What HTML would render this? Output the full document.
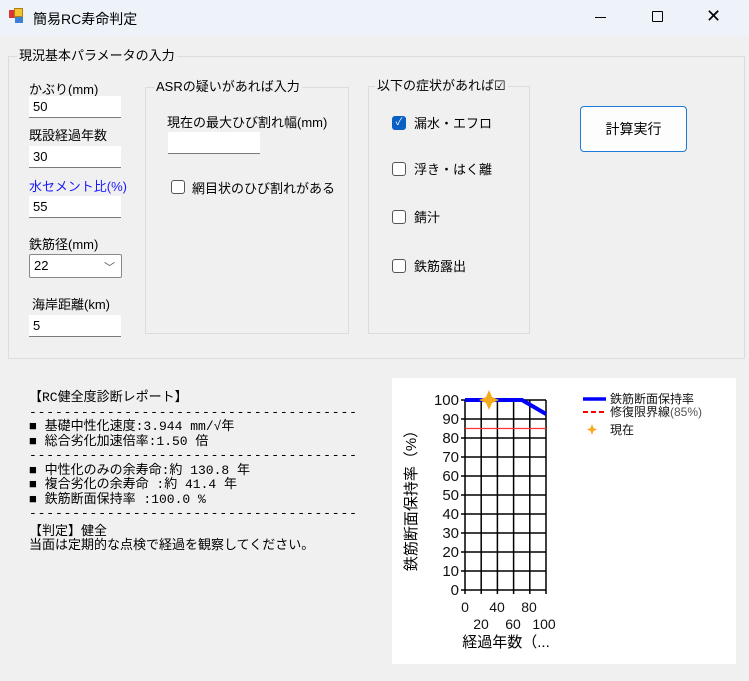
<!DOCTYPE html>
<html><head><meta charset="utf-8"><style>
*{margin:0;padding:0;box-sizing:border-box}
body{width:749px;height:681px;background:#f0f0f0;position:relative;overflow:hidden;font-family:"Liberation Sans","Noto Sans CJK JP",sans-serif;font-size:13px;color:#000}
.a{position:absolute;white-space:nowrap}
.tb{background:#fff;border-bottom:1px solid #7a7a7a;height:22px;width:92px;padding:3px 4px;font-size:13px;font-family:"Liberation Sans","Noto Sans CJK JP",sans-serif}
.gb{position:absolute;border:1px solid #dcdcdc}
.lg{position:absolute;background:#f0f0f0;padding:0 2px;font-size:13px;top:-10px;line-height:18px}
.cb{position:absolute;width:14px;height:14px;border:1px solid #555;border-radius:3px;background:#fff}
.rep{font-family:"Liberation Mono","Noto Sans CJK JP",monospace;font-size:13px;line-height:14.5px}
.d{letter-spacing:0.85px}
</style></head><body>
<div class="a" style="left:0;top:0;width:749px;height:36px;background:#eef3fa"></div>
<div class="a" style="left:9px;top:10px;width:8px;height:8px;background:#d33"></div>
<div class="a" style="left:14px;top:8px;width:9px;height:9px;background:#f4c430;border:1px solid #b08010"></div>
<div class="a" style="left:15px;top:17px;width:8px;height:6px;background:#3d7fd6"></div>
<div class="a" style="left:33px;top:9px;font-size:14px">簡易RC寿命判定</div>
<div class="a" style="left:595px;top:17px;width:11px;height:1px;background:#000"></div>
<div class="a" style="left:652px;top:11px;width:11px;height:11px;border:1px solid #000;border-radius:1px"></div>
<div class="a" style="left:706px;top:6px;font-size:18px;line-height:20px">✕</div>

<div class="gb" style="left:8px;top:56px;width:737px;height:303px"><div class="lg" style="left:8px">現況基本パラメータの入力</div></div>

<div class="a" style="left:29px;top:79px">かぶり(mm)</div>
<div class="a tb" style="left:29px;top:96px">50</div>
<div class="a" style="left:29px;top:125px">既設経過年数</div>
<div class="a tb" style="left:29px;top:146px">30</div>
<div class="a" style="left:29px;top:176px;color:#1a1aff">水セメント比(%)</div>
<div class="a tb" style="left:29px;top:196px">55</div>
<div class="a" style="left:29px;top:234px">鉄筋径(mm)</div>
<div class="a" style="left:29px;top:254px;width:93px;height:24px;background:#fff;border:1px solid #888;border-radius:2px;padding:3px 4px">22<span style="position:absolute;right:6px;top:4px;color:#555;font-size:11px">﹀</span></div>
<div class="a" style="left:32px;top:294px">海岸距離(km)</div>
<div class="a tb" style="left:29px;top:315px">5</div>

<div class="gb" style="left:145px;top:87px;width:204px;height:247px"><div class="lg" style="left:8px">ASRの疑いがあれば入力</div></div>
<div class="a" style="left:167px;top:112px">現在の最大ひび割れ幅(mm)</div>
<div class="a tb" style="left:168px;top:132px;width:92px">&nbsp;</div>
<div class="cb" style="left:171px;top:180px"></div>
<div class="a" style="left:192px;top:178px">網目状のひび割れがある</div>

<div class="gb" style="left:368px;top:86px;width:162px;height:248px"><div class="lg" style="left:6px">以下の症状があれば☑</div></div>
<div class="cb" style="left:392px;top:116px;background:#0a5fc4;border-color:#0a5fc4;color:#fff;font-size:10px;line-height:12px;text-align:center">✓</div>
<div class="a" style="left:414px;top:113px">漏水・エフロ</div>
<div class="cb" style="left:392px;top:162px"></div>
<div class="a" style="left:414px;top:159px">浮き・はく離</div>
<div class="cb" style="left:392px;top:210px"></div>
<div class="a" style="left:414px;top:207px">錆汁</div>
<div class="cb" style="left:392px;top:259px"></div>
<div class="a" style="left:414px;top:256px">鉄筋露出</div>

<div class="a" style="left:580px;top:106px;width:107px;height:46px;background:#fdfdfd;border:1px solid #1e7ad6;border-radius:4px;text-align:center;line-height:44px;font-size:14px">計算実行</div>

<div class="a rep" style="left:29px;top:391px">【RC健全度診断レポート】<br><span class="d">--------------------------------------</span><br>■ 基礎中性化速度:3.944 mm/√年<br>■ 総合劣化加速倍率:1.50 倍<br><span class="d">--------------------------------------</span><br>■ 中性化のみの余寿命:約 130.8 年<br>■ 複合劣化の余寿命  :約 41.4 年<br>■ 鉄筋断面保持率    :100.0 %<br><span class="d">--------------------------------------</span><br><span style="display:block;height:3px"></span>【判定】健全<br>当面は定期的な点検で経過を観察してください。</div>

<svg class="a" style="left:392px;top:378px" width="344" height="286" viewBox="392 378 344 286">
<rect x="392" y="378" width="344" height="286" fill="#fff"/>
<g stroke="#000" stroke-width="1.5">
<line x1="465" y1="400" x2="465" y2="594"/><line x1="481.2" y1="400" x2="481.2" y2="594"/><line x1="497.4" y1="400" x2="497.4" y2="594"/><line x1="513.6" y1="400" x2="513.6" y2="594"/><line x1="529.8" y1="400" x2="529.8" y2="594"/><line x1="546" y1="400" x2="546" y2="594"/>
<line x1="461" y1="400" x2="546" y2="400"/><line x1="461" y1="419" x2="546" y2="419"/><line x1="461" y1="438" x2="546" y2="438"/><line x1="461" y1="457" x2="546" y2="457"/><line x1="461" y1="476" x2="546" y2="476"/><line x1="461" y1="495" x2="546" y2="495"/><line x1="461" y1="514" x2="546" y2="514"/><line x1="461" y1="533" x2="546" y2="533"/><line x1="461" y1="552" x2="546" y2="552"/><line x1="461" y1="571" x2="546" y2="571"/><line x1="461" y1="590" x2="546" y2="590"/>
</g>
<line x1="465" y1="428.5" x2="546" y2="428.5" stroke="#f33" stroke-width="1.3"/>
<polyline points="465,400 522,400 546,414" fill="none" stroke="#00f" stroke-width="4"/>
<path d="M489,390 L492,397 L499,400 L492,403 L489,410 L486,403 L479,400 L486,397Z" fill="#f7a81b"/>
<g font-size="15" fill="#111" text-anchor="end" font-family="Liberation Sans,sans-serif">
<text x="459" y="405">100</text><text x="459" y="424">90</text><text x="459" y="443">80</text><text x="459" y="462">70</text><text x="459" y="481">60</text><text x="459" y="500">50</text><text x="459" y="519">40</text><text x="459" y="538">30</text><text x="459" y="557">20</text><text x="459" y="576">10</text><text x="459" y="595">0</text>
</g>
<g font-size="14" fill="#111" text-anchor="middle" font-family="Liberation Sans,sans-serif">
<text x="465" y="612">0</text><text x="497" y="612">40</text><text x="529" y="612">80</text>
<text x="481" y="629">20</text><text x="513" y="629">60</text><text x="544" y="629">100</text>
</g>
<text x="506" y="647" font-size="15" text-anchor="middle" font-family="Liberation Sans,Noto Sans CJK JP,sans-serif">経過年数（...</text>
<text transform="translate(416,497) rotate(-90)" font-size="15" text-anchor="middle" font-family="Liberation Sans,Noto Sans CJK JP,sans-serif">鉄筋断面保持率（%）</text>
<line x1="583" y1="399" x2="606" y2="399" stroke="#00f" stroke-width="3.5"/>
<line x1="583" y1="412" x2="606" y2="412" stroke="#f00" stroke-width="2" stroke-dasharray="5,3"/>
<path d="M592,424 L593.5,428 L597,429.5 L593.5,431 L592,435 L590.5,431 L587,429.5 L590.5,428Z" fill="#f7a81b"/>
<g font-size="12" font-family="Liberation Sans,Noto Sans CJK JP,sans-serif" fill="#111">
<text x="610" y="403">鉄筋断面保持率</text><text x="610" y="416">修復限界線<tspan fill="#555">(85%)</tspan></text><text x="610" y="434">現在</text>
</g>
</svg>
</body></html>
